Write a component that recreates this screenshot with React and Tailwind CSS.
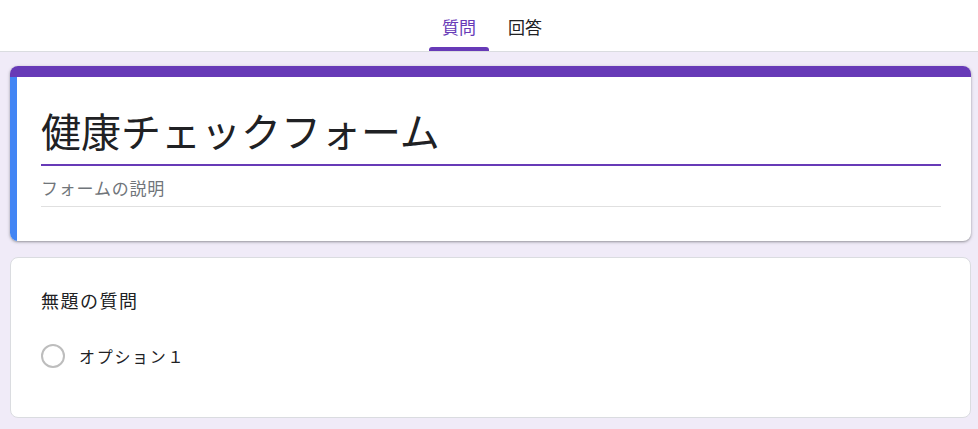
import React from 'react'

const font = { fontFamily: '"Noto Sans CJK JP", "Noto Sans", sans-serif' }

function Tabs() {
    return (
        <div className="h-[52px] bg-white border-b border-[#dadce0] flex justify-center">
            <div className="flex gap-[16px] mr-[4px] h-full">
                <div className="relative w-[60px] h-full flex justify-center pt-[14px]">
                    <span className="text-[17px] leading-[26px] text-[#673ab7]">質問</span>
                    <div className="absolute bottom-0 left-0 right-0 h-[4px] bg-[#673ab7] rounded-t-[3px]"></div>
                </div>
                <div className="w-[40px] h-full flex justify-center pt-[14px]">
                    <span className="text-[17px] leading-[26px] text-[#202124]">回答</span>
                </div>
            </div>
        </div>
    )
}

function TitleCard() {
    return (
        <div className="rounded-[8px] bg-white overflow-hidden shadow-[0_1px_2px_rgba(60,64,67,0.35),0_1px_3px_1px_rgba(60,64,67,0.15)]">
            <div className="h-[11px] bg-[#673ab7]"></div>
            <div className="flex">
                <div className="w-[7px] bg-[#4285f4]"></div>
                <div className="flex-1 pl-[24px] pr-[30px] pt-[25px] pb-[34px]">
                    <div className="border-b-2 border-[#673ab7] pb-[6px]">
                        <div className="text-[40px] leading-[56px] text-[#202124]">健康チェックフォーム</div>
                    </div>
                    <div className="border-b border-[#e0e0e0] pt-[8px] pb-[4px]">
                        <div className="text-[17px] leading-[28px] tracking-[0.8px] text-[#70757a]">フォームの説明</div>
                    </div>
                </div>
            </div>
        </div>
    )
}

function QuestionCard() {
    return (
        <div className="rounded-[8px] bg-white border border-[#dadce0] px-[30px] pt-[29px] pb-[49px]">
            <div className="text-[18px] leading-[26px] tracking-[1.5px] text-[#202124]">無題の質問</div>
            <div className="flex items-center mt-[31px]">
                <div className="w-[24px] h-[24px] rounded-full border-2 border-[#bdbdbd]"></div>
                <span className="ml-[14px] text-[16px] text-[#202124] tracking-[1.7px]">オプション１</span>
            </div>
        </div>
    )
}

export default function App() {
    return (
        <div style={font} className="w-[978px] h-[429px] bg-[#f0ebf8] overflow-hidden">
            <Tabs />
            <div className="pl-[10px] pr-[7px] pt-[14px] flex flex-col gap-[16px]">
                <TitleCard />
                <QuestionCard />
            </div>
        </div>
    )
}
